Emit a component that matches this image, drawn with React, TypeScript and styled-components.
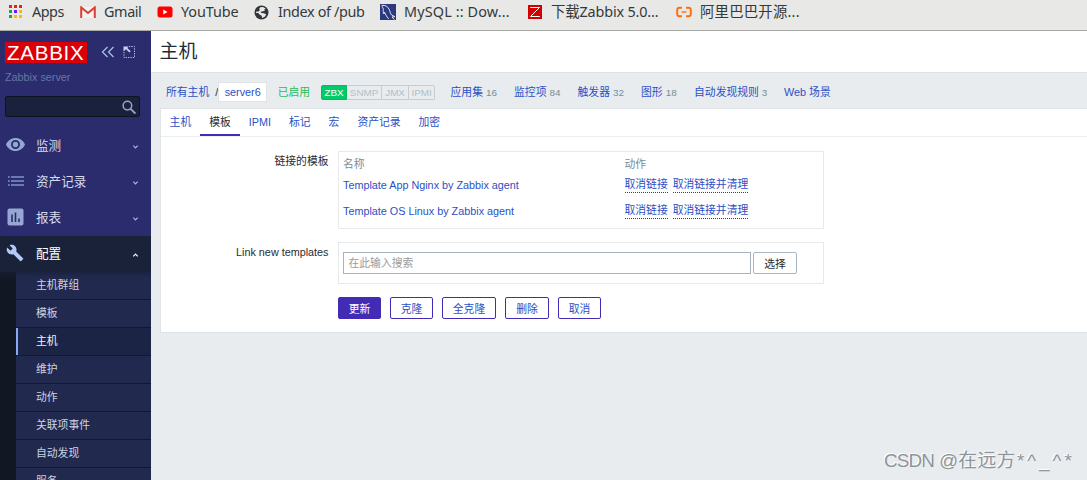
import React from 'react';
import styled, { createGlobalStyle, css } from 'styled-components';

const Global = createGlobalStyle`
  * { box-sizing: border-box; }
  html, body { margin: 0; padding: 0; overflow: hidden; }
  body {
    font-family: "Liberation Sans", "Noto Sans CJK SC", sans-serif;
    font-size: 10.8px;
    color: #1f2c33;
  }
`;

const Screen = styled.div`
  position: relative;
  width: 1087px;
  height: 480px;
  display: flex;
  flex-direction: column;
  overflow: hidden;
  background: #e8ecef;
`;

/* Bookmarks bar */
const Bookmarks = styled.div`
  flex: none;
  display: flex;
  height: 31px;
  padding: 0 0 6px 8px;
  align-items: center;
  background: #e8e8e7;
  border-bottom: 1px solid #a9a9a7;
`;
const Bookmark = styled.div<{ $w: number; $gap?: number; $spacing?: number }>`
  flex: none;
  display: flex;
  align-items: center;
  gap: ${p => p.$gap ?? 8}px;
  width: ${p => p.$w}px;
  font: 14.4px/24px "Noto Sans", "Noto Sans CJK SC", sans-serif;
  letter-spacing: ${p => p.$spacing ?? 0}px;
  color: #333a3c;
  white-space: nowrap;
  svg { flex: none; display: block; }
`;

const Body = styled.div`
  flex: 1;
  display: flex;
  min-height: 0;
`;

/* Sidebar */
const Sidebar = styled.aside`
  flex: none;
  width: 151px;
  display: flex;
  flex-direction: column;
  overflow: hidden;
  background: #2a2c6d;
`;
const Brand = styled.div`
  flex: none;
  display: flex;
  align-items: center;
  height: 22px;
  margin: 10px 0 0 5px;
`;
const Logo = styled.div`
  width: 82px;
  height: 21px;
  padding-left: 2px;
  background: #d90007;
  color: #fff;
  font: 20.6px/21px "Liberation Sans", sans-serif;
  letter-spacing: .7px;
  white-space: nowrap;
  overflow: hidden;
`;
const BrandIcons = styled.div`
  display: flex;
  align-items: center;
  gap: 8px;
  margin-left: 14px;
`;
const ServerName = styled.div`
  flex: none;
  height: 14px;
  margin: 7px 0 0 5px;
  line-height: 14px;
  color: #6877a3;
`;
const Search = styled.div`
  flex: none;
  display: flex;
  align-items: center;
  justify-content: flex-end;
  width: 135px;
  height: 21px;
  margin: 12px 0 11px 5px;
  padding: 1px 3px 0 0;
  border: 1px solid #0d1320;
  border-radius: 2px;
  background: #1a213c;
`;
const MenuItem = styled.div<{ $open?: boolean }>`
  flex: none;
  display: flex;
  align-items: center;
  height: 36px;
  padding: 0 11px 0 6px;
  font-size: 12.6px;
  color: ${p => (p.$open ? '#fff' : '#d5daf0')};
  background: ${p => (p.$open ? '#1a2239' : 'transparent')};
`;
const MenuIcon = styled.span`
  display: flex;
  width: 30px;
  padding-bottom: 2px;
  svg { display: block; }
`;
const MenuText = styled.span`
  flex: 1;
  line-height: 18px;
`;
const SubMenu = styled.div`
  flex: none;
  padding-left: 16px;
  background: linear-gradient(#151c2b, #111823 10px);
`;
const SubItem = styled.div<{ $active?: boolean; $first?: boolean }>`
  height: 28px;
  padding-left: 20px;
  line-height: 27px;
  color: #cdd3e4;
  border-bottom: 1px solid #12192c;
  background: ${p => (p.$active ? '#1b2444' : p.$first ? 'linear-gradient(#1b2342, #21294f 6px)' : '#21294f')};
  ${p => p.$active && css`box-shadow: inset 2px 0 #88aaf4; color: #f0f3fb;`}
`;

/* Content */
const Main = styled.main`
  flex: 1;
  min-width: 0;
  display: flex;
  flex-direction: column;
`;
const Header = styled.header`
  flex: none;
  height: 42px;
  padding-left: 8.5px;
  font-size: 18.9px;
  line-height: 41px;
  background: #fff;
  border-bottom: 1px solid #dce2e6;
`;
const ObjectNav = styled.nav`
  flex: none;
  display: flex;
  align-items: center;
  height: 35px;
  padding: 3px 0 0 15px;
  line-height: 18px;
  white-space: nowrap;
`;
const Link = styled.span`
  color: #2b4fc4;
`;
const Slash = styled.span`
  margin-left: 6px;
`;
const Crumb = styled(Link)`
  width: 49px;
  height: 20px;
  border: 1px solid #dfe4e7;
  background: #fff;
  text-align: center;
`;
const Enabled = styled.span`
  margin-left: 10.5px;
  color: #26bd57;
`;
const Statuses = styled.div`
  display: flex;
  width: 114px;
  height: 15px;
  margin: 1px 15.5px 0 11px;
  font-size: 9.9px;
  line-height: 14px;
`;
const Status = styled.span<{ $w: number; $on?: boolean }>`
  width: ${p => p.$w}px;
  text-align: center;
  color: ${p => (p.$on ? '#fff' : '#b4bec4')};
  background: ${p => (p.$on ? '#00cb68' : 'transparent')};
  border: 1px solid ${p => (p.$on ? '#00bd5e' : '#c5cdd2')};
  border-left-width: ${p => (p.$on ? 1 : 0)}px;
  &:first-child { border-radius: 2px 0 0 2px; }
  &:last-child { border-radius: 0 2px 2px 0; }
`;
const NavLink = styled.div<{ $w: number }>`
  width: ${p => p.$w}px;
`;
const Count = styled.span`
  margin-left: 3px;
  font-size: 9.9px;
  color: #768d99;
`;

const Card = styled.section`
  flex: none;
  height: 225px;
  margin-left: 9px;
  border: 1px solid #dfe4e7;
  border-right: 0;
  background: #fff;
`;
const Tabs = styled.div`
  display: flex;
  height: 28px;
  margin-left: -.4px;
  border-bottom: 1px solid #ebeef0;
`;
const Tab = styled.div<{ $active?: boolean }>`
  height: 27px;
  padding: 0 9px;
  line-height: 27px;
  color: ${p => (p.$active ? '#1f2c33' : '#2b4fc4')};
  border-bottom: 2px solid ${p => (p.$active ? '#432cb5' : 'transparent')};
`;
const Form = styled.div`
  display: grid;
  grid-template-columns: 167.5px 486px;
  column-gap: 9.5px;
  padding-top: 14px;
`;
const Label = styled.div`
  text-align: right;
  line-height: 20px;
`;
const TemplateBox = styled.div`
  height: 78px;
  margin-bottom: 13px;
  padding: 1px 4px;
  border: 1px solid #e6eaed;
`;
const TemplateRow = styled.div<{ $h: number; $head?: boolean }>`
  display: grid;
  grid-template-columns: 281.5px 1fr;
  align-items: center;
  height: ${p => p.$h}px;
  color: ${p => (p.$head ? '#768d99' : '#2b4fc4')};
`;
const TemplateName = styled.span`
  padding-bottom: 2px;
`;
const Actions = styled.div`
  display: flex;
  gap: 5px;
  padding-bottom: 2px;
`;
const Action = styled.span`
  height: 16px;
  line-height: 15px;
  border-bottom: 1px dotted #432cb5;
`;
const SearchBox = styled.div`
  display: flex;
  gap: 2px;
  height: 42px;
  margin-bottom: 13px;
  padding: 9px 4px;
  border: 1px solid #e6eaed;
`;
const Field = styled.div`
  width: 408px;
  height: 22px;
  padding-left: 4.5px;
  line-height: 21px;
  color: #9b9b9b;
  border: 1px solid #a8b3bd;
`;
const Button = styled.button<{ $w: number; $kind?: 'primary' | 'plain' }>`
  width: ${p => p.$w}px;
  height: 22px;
  padding: 0;
  font: inherit;
  line-height: 22px;
  border: 1px solid ${p => (p.$kind === 'plain' ? '#a8b6c2' : '#432cb5')};
  border-radius: 2px;
  color: ${p => (p.$kind === 'primary' ? '#fff' : p.$kind === 'plain' ? '#1f2c33' : '#2b4fc4')};
  background: ${p => (p.$kind === 'primary' ? '#432cb5' : '#fff')};
`;
const Footer = styled.div`
  grid-column: 2;
  display: flex;
  gap: 9px;
`;
const Watermark = styled.div`
  position: absolute;
  left: 884px;
  bottom: 5px;
  display: flex;
  font: 18.8px/28px "Liberation Sans", "Noto Sans CJK SC", sans-serif;
  color: #8f9498;
  text-shadow: -1px -1px 0 #fff;
  white-space: nowrap;
`;
const WatermarkPart = styled.span<{ $w: number; $spacing: number }>`
  width: ${p => p.$w}px;
  letter-spacing: ${p => p.$spacing}px;
`;

const AppsIcon = () => {
  const colors = ['#e8211b', '#e8211b', '#e8211b', '#14a653', '#6a1cf0', '#f2b90f', '#14a653', '#f2b90f', '#f2b90f'];
  return (
    <svg width="15" height="14" viewBox="0 0 15 14">
      {colors.map((c, i) => (
        <rect key={i} x={1 + (i % 3) * 5} y={Math.floor(i / 3) * 5} width="3" height="3" fill={c} />
      ))}
    </svg>
  );
};
const GmailIcon = () => (
  <svg width="16" height="12" viewBox="0 0 16 12">
    <path d="M1 1h14v11H1z" fill="#f3f1f0" />
    <path d="M1.2 12V1.4L8 7l6.8-5.6V12" fill="none" stroke="#dc3f35" strokeWidth="2" />
  </svg>
);
const YouTubeIcon = () => (
  <svg width="16" height="12" viewBox="0 0 16 12">
    <rect x=".5" y=".5" width="15" height="11" rx="2.5" fill="#f00" />
    <path d="M6.3 3.6v4.8L10.5 6z" fill="#fff" />
  </svg>
);
const GlobeIcon = () => (
  <svg width="15" height="15" viewBox="0 0 15 15">
    <circle cx="7.5" cy="7.5" r="7" fill="#303639" />
    <path d="M6.3 2.2L9 2.1l2.6 1.5-1.3 1.2.5 1-2.6.8-1.7.2.9 1.2 2.4.2 2.3 1-1 2.4-3 1.4-.4-2.3-2.2-1.2-1.3-1.4-2.2-.2.3-1.3 2.3-.1 1.3-1.5-.8-1.3z" fill="#e8e8e7" />
  </svg>
);
const MysqlIcon = () => (
  <svg width="16" height="16" viewBox="0 0 16 16">
    <rect width="16" height="16" fill="#2b3a7e" />
    <path d="M2 1.3c3-.4 5.7 1.1 7.1 3.9 1 2 1.1 4.4 2.4 5.7l3.3 1.8-2.8.3 2.3 2.5M2 1.3c-.3 1.6 1.2 2.3 1.3 4 .1 1.6-.5 3.5.6 4.7.6-.2.6-1.3.7-1.8.8 1.8 2 4.5 4.1 6.7" fill="none" stroke="#e4e9f4" />
  </svg>
);
const ZIcon = () => (
  <svg width="14" height="14" viewBox="0 0 14 14">
    <rect width="14" height="14" fill="#d40000" />
    <path d="M2.2 2.5h9.3L2.5 11.5h9.3" fill="none" stroke="#fff" />
  </svg>
);
const AliIcon = () => (
  <svg width="16" height="12" viewBox="0 0 16 12">
    <path d="M6 1.8H3.6Q1.2 1.8 1.2 4v4q0 2.2 2.4 2.2H6M10 1.8h2.4q2.4 0 2.4 2.2v4q0 2.2-2.4 2.2H10" fill="none" stroke="#ff7010" strokeWidth="2" />
    <path d="M5.5 6h5" stroke="#ff7010" strokeWidth="1.4" />
  </svg>
);
const CollapseIcon = () => (
  <svg width="14" height="12" viewBox="0 0 14 12">
    <path d="M6.5 1L1.5 6l5 5M12.5 1l-5 5 5 5" fill="none" stroke="#a9bbe8" strokeWidth="1.3" />
  </svg>
);
const KioskIcon = () => (
  <svg width="13" height="12" viewBox="0 0 13 12">
    <path d="M6 .5h5.5v11H1V6" fill="none" stroke="#a5b6e0" strokeDasharray="1.4 1" />
    <path d="M.5.5h5.2L4.300 2l3.400 3.200-1.300 1.300L3 3.200.5 5.500z" fill="#c6d4f4" />
  </svg>
);
const SearchIcon = () => (
  <svg width="14" height="15" viewBox="0 0 14 15">
    <circle cx="5.4" cy="5.6" r="4.3" fill="none" stroke="#93a4c8" strokeWidth="1.5" />
    <path d="M8.6 8.8l4.8 4.8" stroke="#93a4c8" strokeWidth="1.9" />
  </svg>
);
const EyeIcon = () => (
  <svg width="20" height="16" viewBox="0 0 20 16">
    <path fillRule="evenodd" d="M9.5 1C5.3 1 1.7 3.5 0 7.5 1.7 11.5 5.3 14 9.5 14s7.8-2.5 9.5-6.5C17.3 3.5 13.7 1 9.5 1zm0 11a4.500 4.500 0 1 1 0-9 4.500 4.500 0 0 1 0 9z" fill="#94a6d4" />
    <circle cx="9.5" cy="7.5" r="2.7" fill="#94a6d4" />
  </svg>
);
const ListIcon = () => (
  <svg width="18" height="12" viewBox="0 0 18 12">
    <path d="M2 2h1.700M2 6h1.700M2 10h1.700M5 2h13M5 6h13M5 10h13" stroke="#8294c8" strokeWidth="1.5" />
  </svg>
);
const ReportIcon = () => (
  <svg width="18" height="18" viewBox="0 0 18 18">
    <rect x="1.5" y=".5" width="16" height="17" rx="2" fill="#97a6d2" />
    <path d="M6 6.500V14M9.500 4.500V14M13 10.500V14" stroke="#2a2c6d" strokeWidth="1.6" />
  </svg>
);
const WrenchIcon = () => (
  <svg width="18" height="18" viewBox="0 0 24 24">
    <path d="M22.7 19l-9.1-9.1c.9-2.3.4-5-1.5-6.9-2-2-5-2.4-7.4-1.3L9 6 6 9 1.6 4.7C.4 7.1.9 10.1 2.900 12.100c1.900 1.900 4.600 2.400 6.900 1.500l9.100 9.100c.4.4 1 .4 1.400 0l2.300-2.300c.5-.4.5-1.100.1-1.400z" fill="#b4c9f5" />
  </svg>
);
const ChevronBox = styled.span`
  display: flex;
  padding-top: 2px;
`;
const Chevron = ({ up }: { up?: boolean }) => (
  <ChevronBox>
    <svg width="9" height="6" viewBox="0 0 9 6">
      <path d={up ? 'M2.300 4.300L4.500 2 6.700 4.300' : 'M2.300 1.700L4.500 4 6.700 1.700'} fill="none" stroke={up ? '#eef2fb' : '#aab7dc'} strokeWidth="1.2" />
    </svg>
  </ChevronBox>
);

const menu = [
  { text: '监测', icon: <EyeIcon /> },
  { text: '资产记录', icon: <ListIcon /> },
  { text: '报表', icon: <ReportIcon /> },
  { text: '配置', icon: <WrenchIcon />, open: true },
];
const subItems = ['主机群组', '模板', '主机', '维护', '动作', '关联项事件', '自动发现', '服务'];
const navLinks: [string, string, number][] = [
  ['应用集', '16', 63.5],
  ['监控项', '84', 63.5],
  ['触发器', '32', 63.5],
  ['图形', '18', 53],
  ['自动发现规则', '3', 90],
  ['Web 场景', '', 60],
];
const tabs = ['主机', '模板', 'IPMI', '标记', '宏', '资产记录', '加密'];
const templates = ['Template App Nginx by Zabbix agent', 'Template OS Linux by Zabbix agent'];

export default function App() {
  return (
    <Screen>
      <Global />
      <Bookmarks>
        <Bookmark $w={72} $gap={9} $spacing={-0.5}><AppsIcon />Apps</Bookmark>
        <Bookmark $w={77} $spacing={-0.4}><GmailIcon />Gmail</Bookmark>
        <Bookmark $w={97} $spacing={-0.1}><YouTubeIcon />YouTube</Bookmark>
        <Bookmark $w={126} $gap={9} $spacing={-0.35}><GlobeIcon />Index of /pub</Bookmark>
        <Bookmark $w={148} $spacing={0.15}><MysqlIcon />MySQL :: Dow...</Bookmark>
        <Bookmark $w={148} $gap={9} $spacing={-0.15}><ZIcon />下载Zabbix 5.0...</Bookmark>
        <Bookmark $w={130} $spacing={0.2}><AliIcon />阿里巴巴开源...</Bookmark>
      </Bookmarks>
      <Body>
        <Sidebar>
          <Brand>
            <Logo>ZABBIX</Logo>
            <BrandIcons><CollapseIcon /><KioskIcon /></BrandIcons>
          </Brand>
          <ServerName>Zabbix server</ServerName>
          <Search><SearchIcon /></Search>
          {menu.map(m => (
            <MenuItem key={m.text} $open={m.open}>
              <MenuIcon>{m.icon}</MenuIcon>
              <MenuText>{m.text}</MenuText>
              <Chevron up={m.open} />
            </MenuItem>
          ))}
          <SubMenu>
            {subItems.map((s, i) => (
              <SubItem key={s} $first={i === 0} $active={i === 2}>{s}</SubItem>
            ))}
          </SubMenu>
        </Sidebar>
        <Main>
          <Header>主机</Header>
          <ObjectNav>
            <Link>所有主机</Link>
            <Slash>/</Slash>
            <Crumb>server6</Crumb>
            <Enabled>已启用</Enabled>
            <Statuses>
              <Status $w={26} $on>ZBX</Status>
              <Status $w={35}>SNMP</Status>
              <Status $w={27}>JMX</Status>
              <Status $w={26}>IPMI</Status>
            </Statuses>
            {navLinks.map(([text, count, w]) => (
              <NavLink key={text} $w={w}>
                <Link>{text}</Link>
                {count && <Count>{count}</Count>}
              </NavLink>
            ))}
          </ObjectNav>
          <Card>
            <Tabs>
              {tabs.map((t, i) => <Tab key={t} $active={i === 1}>{t}</Tab>)}
            </Tabs>
            <Form>
              <Label>链接的模板</Label>
              <TemplateBox>
                <TemplateRow $h={20} $head><span>名称</span><span>动作</span></TemplateRow>
                {templates.map(t => (
                  <TemplateRow key={t} $h={26}>
                    <TemplateName>{t}</TemplateName>
                    <Actions><Action>取消链接</Action><Action>取消链接并清理</Action></Actions>
                  </TemplateRow>
                ))}
              </TemplateBox>
              <Label>Link new templates</Label>
              <SearchBox>
                <Field>在此输入搜索</Field>
                <Button $w={44} $kind="plain">选择</Button>
              </SearchBox>
              <Footer>
                <Button $w={43} $kind="primary">更新</Button>
                <Button $w={43}>克隆</Button>
                <Button $w={54}>全克隆</Button>
                <Button $w={44}>删除</Button>
                <Button $w={43}>取消</Button>
              </Footer>
            </Form>
          </Card>
        </Main>
      </Body>
      <Watermark>
        <WatermarkPart $w={55} $spacing={-0.8}>CSDN</WatermarkPart>
        <WatermarkPart $w={78} $spacing={0.3}>@在远方</WatermarkPart>
        <WatermarkPart $w={60} $spacing={3}>*^_^*</WatermarkPart>
      </Watermark>
    </Screen>
  );
}
